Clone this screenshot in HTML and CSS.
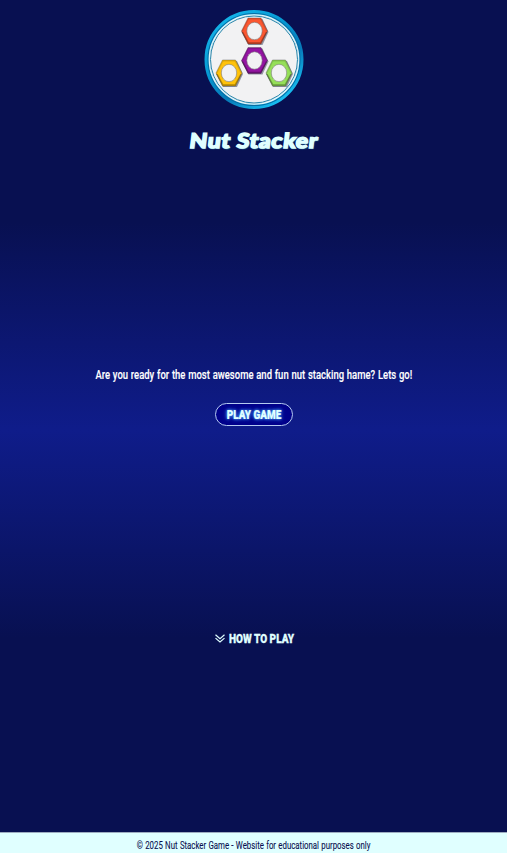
FILE: index.html
```html
<!DOCTYPE html>
<html lang="en">
<head>
<meta charset="utf-8">
<title>Nut Stacker</title>
<link rel="stylesheet" href="styles.css">
</head>
<body>
<header class="header">
<svg class="logo" viewBox="0 0 110 110" aria-hidden="true">
<defs>
<linearGradient id="ring" x1="0" y1="0" x2="0.7" y2="1"><stop offset="0" stop-color="#18bdf0"/><stop offset=".45" stop-color="#0698d2"/><stop offset=".72" stop-color="#0679b8"/><stop offset="1" stop-color="#18bdf0"/></linearGradient>
<g id="nut"><path d="M-13 1 -6 -12H8L14 1 8 14H-6Z" fill="#07102c" opacity=".4"/><path stroke="#222" stroke-opacity=".45" stroke-width=".7" d="M-13 0 -6.5 -13H6.5L13 0 6.5 13H-6.5Z"/><path d="M-12 0-6-12H6L12 0" fill="none" stroke="#000" stroke-opacity=".12"/><path d="M-12 1-6 12H6L12 1" fill="none" stroke="#000" stroke-opacity=".3" stroke-width="1.3"/><ellipse rx="7.7" ry="8.7" fill="#f2f2f3" stroke="#777" stroke-opacity=".8" stroke-width=".7"/></g>
</defs>
<circle cx="55" cy="54.5" r="47" fill="#f2f2f3" stroke="url(#ring)" stroke-width="5"/>
<circle cx="55" cy="54.5" r="46" fill="none" stroke="#076fa5" stroke-width="1.1"/>
<circle cx="55" cy="54.5" r="44.8" fill="none" stroke="#e6f6fa" stroke-width="1.1"/>
<circle cx="55" cy="54.5" r="43.5" fill="none" stroke="#2685ab" stroke-width="1"/>
<use href="#nut" x="55.5" y="26" fill="#fb5730"/>
<use href="#nut" x="55.5" y="55.5" fill="#9415a2"/>
<use href="#nut" x="30" y="68" fill="#ffc20a"/>
<use href="#nut" x="80" y="68" fill="#95df58"/>
</svg>
<h1 class="title"><span>Nut Stacker</span></h1>
</header>
<main class="main">
<p class="intro"><span>Are you ready for the most awesome and fun nut stacking hame? Lets go!</span></p>
<button class="play"><span>PLAY GAME</span></button>
<div class="how"><svg class="chevrons" viewBox="0 0 10 9" aria-hidden="true"><path d="M.5.8 5 4.7 9.5.8M.5 4.1 5 8 9.5 4.1"/></svg><span class="how-text">HOW TO PLAY</span></div>
</main>
<footer class="footer"><span>© 2025 Nut Stacker Game - Website for educational purposes only</span></footer>
</body>
</html>
```
FILE: styles.css
```css
* { box-sizing: border-box; }
body {
  margin: 0;
  height: 853px;
  display: flex;
  flex-direction: column;
  overflow: hidden;
  color: #fff;
  font-family: Roboto, "Liberation Sans", sans-serif;
  background: linear-gradient(#081051 222px, #0f1c8a 430px, #081051 638px);
}
span { display: inline-block; white-space: nowrap; }
.header { height: 222px; padding-top: 5px; display: flex; flex-direction: column; align-items: center; }
.logo { width: 110px; height: 110px; flex: none; }
.title {
  margin: 11px 0 0;
  font: 900 20.5px/29px Lato, sans-serif;
  letter-spacing: .6px;
  color: #e0ffff;
  text-shadow: 1px 1px 1px #218ba8;
}
.title span { -webkit-text-stroke: 1.4px #e0ffff; transform: translateX(.5px) skewX(-7deg) scaleX(1.12); }
.main { flex: 1; display: flex; flex-direction: column; align-items: center; }
.intro { margin: 143px 0 0; height: 20px; font-size: 13px; font-weight: 500; line-height: 20px; display: flex; justify-content: center; width: 100%; }
.intro span { word-spacing: .6px; transform: translateX(.5px) scaleX(.729); -webkit-text-stroke: .15px #fff; }
.play {
  margin-top: 18px;
  width: 78px;
  height: 23px;
  padding: 0;
  display: flex;
  align-items: center;
  justify-content: center;
  border: 1px solid #b4caf0;
  border-radius: 12px;
  background: #00008b;
  color: #e0ffff;
  font: 900 13.5px/18px Roboto, sans-serif;
  text-shadow: 0 0 3px #58aaff, 0 0 5px #3c9dff;
}
.play span { transform: translate(1px, -1px) scaleX(.735); -webkit-text-stroke: .2px #e0ffff; }
.how { margin-top: 201px; width: 78px; height: 22px; display: flex; align-items: center; gap: 4px; color: #e0ffff; }
.chevrons { width: 10px; height: 9px; flex: none; fill: none; stroke: #e0ffff; stroke-width: 1.2; }
.how-text { font: 900 13.5px/22px Roboto, sans-serif; transform: scaleX(.745); transform-origin: left; -webkit-text-stroke: .3px #e0ffff; }
.footer { height: 21px; flex: none; border-top: 1px solid #9eacc0; background: #e0ffff; color: #080f4f; font-size: 11px; line-height: 25px; display: flex; justify-content: center; }
.footer span { word-spacing: .5px; transform: translateX(.5px) scaleX(.712); -webkit-text-stroke: .1px #080f4f; }
```
